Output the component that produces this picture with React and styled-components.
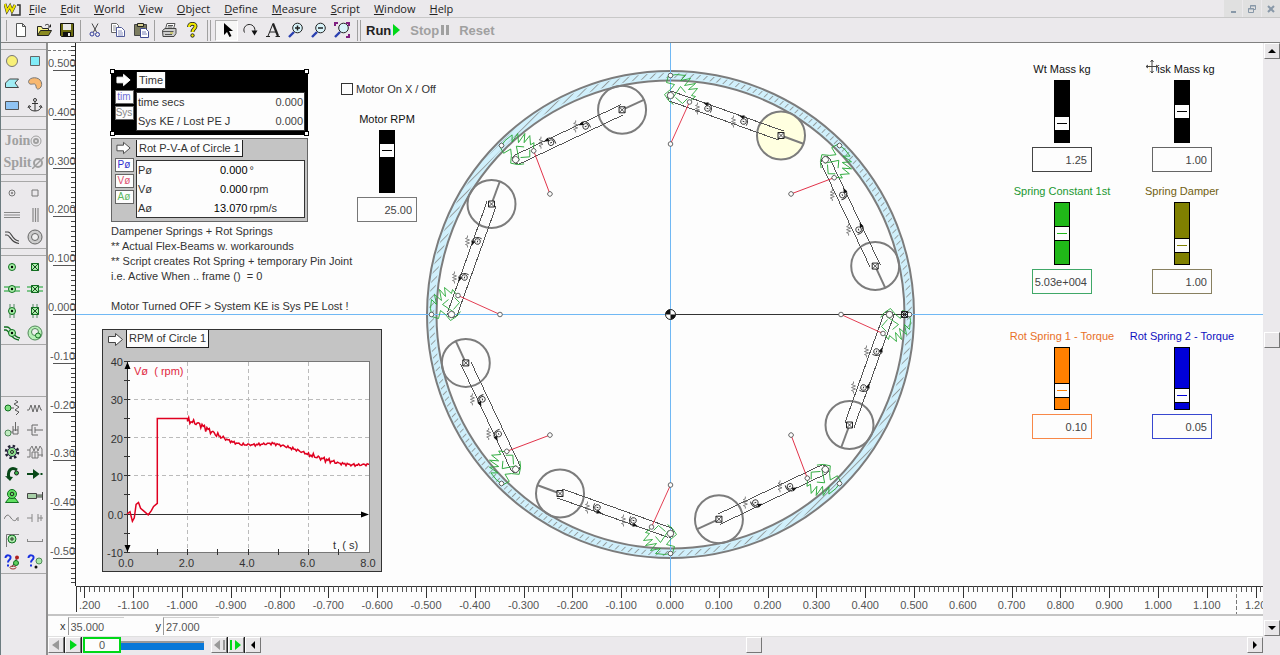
import React, { useState } from "react";
import styled, { createGlobalStyle, css } from "styled-components";

const GlobalStyle = createGlobalStyle`
  * {
    box-sizing: border-box;
  }

  body {
    margin: 0;
    overflow: hidden;
    background-color: #ebe9ec;
    color: #333;
    font-family: "Liberation Sans", Arial, sans-serif;
    font-size: 11px;
  }

  button, input {
    font-family: inherit;
    font-size: inherit;
    color: inherit;
  }
`;

/* ---------- frame ---------- */

const Shell = styled.div`
  display: flex;
  flex-direction: column;
  height: 100vh;
  border-left: 1px solid #6c7c80;
`;

const MenuBar = styled.header`
  display: flex;
  align-items: center;
  height: 18px;
  padding-left: 3px;
  border-bottom: 1px solid #c8c8c8;
`;

const Menu = styled.nav`
  display: flex;
  flex: 1;
  gap: 14px;
  padding-left: 7px;
`;

const MenuItem = styled.button`
  padding: 0;
  border: none;
  background: none;
  font-family: "Open Sans", "Noto Sans", sans-serif;
  font-size: 11px;
  line-height: 16px;
  color: #222;

  &::first-letter {
    text-decoration: underline;
  }
`;

const WindowButton = styled.button`
  display: flex;
  align-items: center;
  justify-content: center;
  width: 18px;
  height: 17px;
  margin-left: 1px;
  padding: 0;
  border: none;
  background-color: #e0e0e0;
`;

const ToolBar = styled.div`
  display: flex;
  align-items: center;
  height: 25px;
  padding-left: 3px;
  border-bottom: 1px solid #808080;
`;

const Grip = styled.span`
  width: 4px;
  height: 21px;
  margin: 0 4px;
  border-left: 1px solid #a0a0a0;
  border-right: 1px solid #a0a0a0;

  ${props => props.$single && css`
    width: 1px;
    margin: 0 2px;
    border-right: none;
  `}
`;

const ToolButton = styled.button`
  display: flex;
  align-items: center;
  justify-content: center;
  width: 23px;
  height: 21px;
  padding: 0;
  border: 1px solid;
  border-color: ${props => (props.$active ? "#b0b0b0 #fff #fff #b0b0b0" : "transparent")};
  background-color: ${props => (props.$active ? "#f6f6f6" : "transparent")};
`;

const RunButton = styled.button`
  display: flex;
  align-items: center;
  gap: 2px;
  padding: 0;
  margin: 0 9px 0 1px;
  border: none;
  background: none;
  font-size: 13px;
  font-weight: bold;
  color: ${props => (props.disabled ? "#a0a0a0" : "#222")};
`;

const Workspace = styled.div`
  display: flex;
  flex: 1;
  min-height: 0;
`;

const Palette = styled.aside`
  width: 47px;
  padding-top: 6px;
  border-right: 2px solid #909090;
`;

const PaletteGroup = styled.div`
  display: grid;
  grid-template-columns: repeat(${props => props.$cols || 2}, 1fr);
  grid-auto-rows: 22px;
  margin-bottom: ${props => props.$after || 6}px;
  border-top: 1px solid #a8a8a8;
  border-bottom: 1px solid #a8a8a8;
`;

const PaletteButton = styled.button`
  display: flex;
  align-items: center;
  justify-content: center;
  padding: 0;
  border: none;
  background: none;
  font-family: "Liberation Serif", serif;
  font-size: 14px;
  font-weight: bold;
  color: #a0a0a0;
`;

const Stage = styled.main`
  display: grid;
  flex: 1;
  min-width: 0;
  grid-template-columns: 28px 1fr 17px;
  grid-template-rows: 1fr 28px 22px 17px 2px;
`;

/* ---------- rulers, scroll bars, playback ---------- */

const RulerBox = styled.div`
  overflow: hidden;
  background-color: #fdfdfd;

  svg {
    display: block;
    width: 100%;
    height: 100%;
  }

  text {
    font-size: 11px;
    fill: #555;
  }
`;

const CoordBar = styled.div`
  grid-column: 1 / 3;
  display: flex;
  align-items: center;
  padding-left: 12px;
  border-top: 2px solid #c4c4c4;
  background-color: #fdfdfd;
`;

const CoordLabel = styled.label`
  display: flex;
  align-items: center;
  gap: 2px;
  margin-right: 32px;
`;

const CoordInput = styled.input`
  width: 56px;
  height: 18px;
  padding: 0 2px;
  border: 0 solid #999;
  border-left-width: 1px;
  border-top: 1px solid #d0d0d0;
  background: none;
  color: #555;
`;

const ScrollColumn = styled.div`
  grid-column: 3;
  grid-row: 1 / 4;
  display: flex;
  flex-direction: column;
  align-items: center;
  justify-content: space-between;
`;

const PlayBar = styled.div`
  grid-column: 1 / 3;
  display: flex;
  align-items: center;
  border-top: 1px solid #e0e0e0;
`;

const BevelButton = styled.button`
  display: flex;
  align-items: center;
  justify-content: center;
  width: 16px;
  height: 16px;
  padding: 0;
  border: 1px solid;
  border-color: #fff #777 #777 #fff;
  box-shadow: ${props => (props.$deep ? "1px 0 0 #222" : "none")};
  margin-right: ${props => (props.$deep ? 1 : 0)}px;
  background-color: #e8e6e8;
`;

const FrameInput = styled.input`
  width: 38px;
  height: 16px;
  margin-left: 1px;
  padding: 0;
  border: 2px solid #00d818;
  background-color: #fdfdfd;
  text-align: center;
  color: #555;
`;

const FrameSlider = styled.input`
  appearance: none;
  width: 83px;
  height: 9px;
  margin: 0 7px 0 0;
  border-top: 2px solid #999;
  background-color: #0878d8;

  &::-webkit-slider-thumb {
    appearance: none;
    width: 1px;
    height: 6px;
  }
`;

const ScrollTrack = styled.div`
  display: flex;
  flex: 1;
  align-items: center;
  justify-content: center;
`;

/* ---------- canvas ---------- */

const Canvas = styled.section`
  position: relative;
  overflow: hidden;
  background-color: #fdfdfd;
`;

const Drawing = styled.svg`
  position: absolute;
  inset: 0;
  width: 100%;
  height: 100%;
`;

const Placed = styled.div`
  position: absolute;
  left: ${props => props.$x}px;
  top: ${props => props.$y}px;
`;

const Meter = styled(Placed)`
  display: grid;
  grid-template-columns: 24px 1fr;
  width: 197px;
  padding: 1px 2px 3px 0;
  border: 1px solid ${props => (props.$selected ? "#000" : "#666")};
  background-color: ${props => (props.$selected ? "#000" : "#c4c4c4")};
`;

const MeterTags = styled.div`
  display: flex;
  flex-direction: column;
  align-items: center;
  gap: 2px;

  svg {
    height: 16px;
  }
`;

const Tag = styled.button`
  width: 19px;
  height: 14px;
  padding: 0;
  border: 1px solid #666;
  background-color: #fdfdfd;
  font-size: 10px;
  line-height: 12px;
  color: ${props => props.$color};
`;

const MeterTitle = styled.h2`
  justify-self: start;
  width: fit-content;
  margin: 0 0 3px;
  padding: 0 2px;
  border: 1px solid #222;
  border-top: none;
  background-color: #fdfdfd;
  font-size: 11px;
  font-weight: normal;
  line-height: 16px;
`;

const Readout = styled.table`
  width: 100%;
  border: 1px solid #333;
  border-collapse: collapse;
  background-color: #fdfdfd;

  th, td {
    height: 19px;
    padding: 0 1px;
    font-weight: normal;
    text-align: left;
  }
`;

const Value = styled.td`
  && {
    text-align: right;
    color: ${props => (props.$dark ? "#000" : "#444")};
  }
`;

const Unit = styled.td`
  width: 56px;
`;

const Handle = styled.i`
  position: absolute;
  width: 5px;
  height: 5px;
  border: 1px solid #000;
  background-color: #fff;
  ${props => props.$v}: -2px;
  ${props => props.$h}: -2px;
`;

const Notes = styled(Placed)`
  line-height: 15px;
  white-space: pre;
`;

const CheckLabel = styled(Placed).attrs({ as: "label" })`
  display: flex;
  align-items: center;
  gap: 3px;
`;

const CheckBox = styled.input`
  appearance: none;
  width: 12px;
  height: 12px;
  margin: 0;
  border: 1px solid #333;
  background-color: #fdfdfd;
`;

const Control = styled(Placed)`
  display: flex;
  flex-direction: column;
  align-items: center;
  gap: 4px;
  width: 120px;
  color: ${props => props.$color};
`;

const ControlLabel = styled.label`
  line-height: 14px;
  white-space: nowrap;
`;

const Slider = styled.input`
  appearance: none;
  writing-mode: vertical-lr;
  direction: rtl;
  width: 16px;
  height: 63px;
  margin: 0;
  border: 1px solid #000;
  background-color: ${props => props.$color};

  &::-webkit-slider-thumb {
    appearance: none;
    width: 14px;
    height: 15px;
    border: 1px solid #000;
    border-width: 1px 0;
    background: linear-gradient(${props => props.$mark}, ${props => props.$mark}) center / 10px 1px no-repeat #fdfdfd;
  }
`;

const NumberBox = styled.input`
  width: 60px;
  height: 25px;
  padding: 0 4px 0 0;
  border: 1px solid ${props => props.$line};
  background-color: #fdfdfd;
  text-align: right;
  color: #444;
`;

const GraphWindow = styled(Placed)`
  width: 280px;
  border: 1px solid #333;
  background-color: #c4c4c4;

  svg {
    display: block;
  }

  text {
    font-size: 11px;
    fill: #333;
  }
`;

const GraphHead = styled.div`
  display: flex;
  align-items: center;
  gap: 1px;
  height: 18px;
  padding-left: 4px;
`;

const GraphTitle = styled(MeterTitle)`
  margin: 0;
  line-height: 17px;
`;

const MoveCursor = styled(Placed).attrs({ as: "svg" })`
  pointer-events: none;
`;

/* ---------- icons ---------- */

const Icon = ({ size = 16, children }) => (
  <svg width={size} height={size} viewBox="0 0 16 16" fill="none" stroke="#222" strokeWidth="1">
    {children}
  </svg>
);

const lens = (
  <>
    <path d="M6 10 1 15" stroke="#2a40b0" strokeWidth="2.4" />
    <circle cx="9.500" cy="6" r="4.800" fill="#d8f4fa" stroke="#222" />
  </>
);

const toolIcons = {
  New: <path d="M3.500 1.500h6l3 3v10h-9zM9.500 1.500v3h3" fill="#fff" stroke="#555" />,
  Open: (
    <>
      <path d="M1.500 13.500v-9h4l1 2h6v2.500" fill="#f4f08a" />
      <path d="M1.500 13.500 4.500 8.500h11l-3 5z" fill="#8a8a20" />
      <path d="M9 3.500c2-2 4-1 4.500 1M14.500 2.500v2.500h-2.500" />
    </>
  ),
  Save: (
    <>
      <path d="M1.500 1.500h13v13h-12l-1-1z" fill="#6a6a10" stroke="#111" />
      <path d="M4 2h8v6H4z" fill="#e8e8e8" stroke="none" />
      <path d="M4 10h8v4H4z" fill="#111" stroke="none" />
      <path d="M9 11h2v3H9z" fill="#eee" stroke="none" />
    </>
  ),
  Cut: (
    <>
      <path d="M5 1.500 9.500 10M11 1.500 6.500 10" stroke="#444" />
      <circle cx="5" cy="12" r="2" stroke="#303a98" />
      <circle cx="10.500" cy="12.500" r="2" stroke="#303a98" />
    </>
  ),
  Copy: (
    <>
      <path d="M1.500 1.500h5l2 2v7h-7z" fill="#fff" stroke="#666" />
      <path d="M3 4h3M3 6h4M3 8h4" stroke="#999" />
      <path d="M6.500 5.500h5l3 3v6h-8z" fill="#fff" stroke="#505a98" />
      <path d="M8 9h4M8 11h5M8 13h5" stroke="#8890c0" />
    </>
  ),
  Paste: (
    <>
      <path d="M1.500 2.500h12v11h-12z" fill="#7c7c60" stroke="#444" />
      <path d="M4.500 1.500h6v3h-6z" fill="#d8d090" />
      <path d="M7.500 6.500h5l3 3v6h-8z" fill="#fff" stroke="#404a90" />
      <path d="M9 10h4M9 12h5" stroke="#7880b8" />
    </>
  ),
  Print: (
    <>
      <path d="M4.500 7 6 1.500h8L12.500 7" fill="#fff" stroke="#555" />
      <path d="M1.500 8.500 4 6.500h11v5l-2 3h-11z" fill="#ccc" stroke="#444" />
      <path d="M2 9.500h10.500M4 12.500h7M7 3.500h5M6.500 5h5" stroke="#555" />
      <path d="M9 11h3" stroke="#c8c020" />
    </>
  ),
  Help: (
    <>
      <path d="M5 5c0-4.500 7-4 6.500-.5C11.200 7 8.500 7 8.500 10" stroke="#222" strokeWidth="3.800" />
      <path d="M5 5c0-4.500 7-4 6.500-.5C11.200 7 8.500 7 8.500 10" stroke="#f0e800" strokeWidth="2.200" />
      <circle cx="8.500" cy="13.500" r="1.700" fill="#f0e800" />
    </>
  ),
  Select: <path d="M5 1v12l3-3 2.500 5 2-1L10 9h4z" fill="#000" stroke="none" />,
  Rotate: (
    <>
      <path d="M2.500 10.500A5.500 5.500 0 1 1 12.500 10" />
      <path d="M9.500 8.500h6l-3 5z" fill="#111" stroke="none" />
    </>
  ),
  Text: (
    <>
      <path d="M8 1.500 13 14" strokeWidth="2.200" />
      <path d="M8 1.500 3 14M5 10h6M1 14.500h4M10.500 14.500H15" />
    </>
  ),
  "Zoom in": <>{lens}<path d="M7 6h5M9.500 3.500v5" strokeWidth="1.500" /></>,
  "Zoom out": <>{lens}<path d="M7 6h5" strokeWidth="1.500" /></>,
  "Zoom to fit": <>{lens}<path d="M1 4V1h3M12 1h3v3M15 12v3h-3" stroke="#802080" strokeWidth="2" /></>
};

const G = "#58b868";
const joint = (
  <>
    <circle cx="8" cy="8" r="3.500" fill="#a8f0a8" stroke="#107020" />
    <circle cx="8" cy="8" r="1.200" fill="#000" stroke="none" />
  </>
);
const rigid = (
  <>
    <path d="M4.500 4.500h7v7h-7z" fill="#a8f0a8" stroke="#107020" />
    <path d="m4.500 4.500 7 7m0-7-7 7" stroke="#204828" />
  </>
);

const bodyIcons = {
  Circle: <circle cx="8" cy="8" r="5.500" fill="#f8f078" stroke="#777" />,
  Square: <path d="M3.500 3.500h9v9h-9z" fill="#80ecf8" stroke="#666" />,
  Polygon: <path d="M1.500 12.500V8l4-4h9L11 8l3.500 4.500z" fill="#a0ecf4" stroke="#444" />,
  "Curved polygon": <path d="M1.500 6.500C2.500 1.500 12 1.500 14 6.500c2 4-1 8-3.500 7.500C8 13 10 9.500 7.500 9 5 8.800 2 10.500 1.500 6.500z" fill="#f8b870" stroke="#777" />,
  Rectangle: <path d="M1.500 4.500h13v8h-13z" fill="#90c4f4" stroke="#555" />,
  Anchor: (
    <g stroke="#333">
      <circle cx="8" cy="3" r="1.500" />
      <path d="M8 4.500V14M5 6.500h6M2 9.500c0 6 12 6 12 0M1 11l1-2.500L4 10M15 11l-1-2.500L12 10" />
    </g>
  )
};

const pointIcons = {
  Point: (
    <g stroke="#777">
      <circle cx="8" cy="8" r="3" />
      <circle cx="8" cy="8" r=".8" />
    </g>
  ),
  "Square point": <path d="M5 5h6v6H5z" stroke="#777" />,
  "Horizontal slot": <path d="M0 5.500h16M0 10.500h16M0 8h16" stroke="#888" strokeWidth="1.200" />,
  "Vertical slot": <path d="M6 1v14M8.500 1v14M11 1v14" stroke="#888" strokeWidth="1.200" />,
  "Curved slot": <path d="M1 3h3c4 0 4 9 11 9M1 6h2c3 0 4 8 12 8.500" stroke="#444" strokeWidth="1.200" />,
  "Closed slot": (
    <g stroke="#666">
      <circle cx="8" cy="8" r="7" fill="#ccc" />
      <circle cx="8" cy="8" r="3.500" fill="#eee" />
    </g>
  )
};

const jointIcons = {
  "Pin joint": joint,
  "Rigid joint": rigid,
  "Pinned slot": <><path d="M0 6h16M0 10h16" stroke={G} strokeWidth="1.500" />{joint}</>,
  "Keyed slot": <><path d="M0 6h16M0 10h16" stroke={G} strokeWidth="1.500" />{rigid}</>,
  "Vertical pinned slot": <><path d="M6 1v14M10 1v14" stroke="#508860" />{joint}</>,
  "Vertical keyed slot": <><path d="M6 1v14M10 1v14" stroke="#508860" />{rigid}</>,
  "Curved slot joint": <><path d="M0 2h3c5 0 5 10 13 11M0 5h2c3 0 5 10 13 10" stroke="#107020" strokeWidth="1.300" />{joint}</>,
  "Closed slot joint": (
    <>
      <circle cx="8" cy="8" r="7" fill="#b8f0b8" stroke="#508858" />
      <circle cx="8" cy="7" r="3.500" fill="#eee" stroke="#508858" />
      <circle cx="11" cy="10.500" r="2.500" fill="#a8f0a8" stroke="#107020" />
    </>
  )
};

const forceIcons = {
  "Rotational spring": (
    <>
      <circle cx="4" cy="8" r="3" fill="#80e080" stroke="#107020" />
      <path d="M7 8h3M11 0l3 2-4 2 5 3-4 3 4 2-3 3" stroke="#555" />
    </>
  ),
  Spring: <path d="M0 10h2l2-5 2 7 2-7 2 7 2-7 2 5h1" stroke="#666" />,
  "Rotational damper": (
    <>
      <circle cx="4" cy="11" r="3" fill="#c0ecc0" stroke="#508858" />
      <path d="M7 10h2M9 4v8h5V4M11.500 0v9M9 8h5" stroke="#666" />
    </>
  ),
  Damper: <path d="M0 8h5M11 8h5M11 3H5v10h6M8 5v6M8 8h3" stroke="#666" />,
  Gear: (
    <>
      <circle cx="8" cy="8" r="6" stroke="#223" strokeWidth="2.500" strokeDasharray="2.400 2.300" />
      <circle cx="8" cy="8" r="4.500" fill="#90e090" stroke="#224" />
      <circle cx="8" cy="8" r="1.500" />
    </>
  ),
  "Spring damper": <path d="M0 13h3V5l2-3 2 5 2-5 2 5 2-5 2 3v8M5 8h6v6H5zM8 8v6M11 11h5M0 6h3" stroke="#777" />,
  Torque: (
    <>
      <path d="M13 4C7 0 3 5 5 12" stroke="#084818" strokeWidth="3" />
      <path d="m1 10 8 1-3 4z" fill="#084818" stroke="none" />
      <circle cx="12.500" cy="7" r="2" fill="#38b848" />
    </>
  ),
  Force: <path d="M0 8h8M7 5l4 3-4 3zM13.500 8h2" stroke="#084818" strokeWidth="2" fill="#084818" />,
  Motor: (
    <>
      <path d="M1.500 14.500 5 10h6l3.500 4.500z" fill="#60e060" stroke="#107020" />
      <circle cx="8" cy="6" r="4.500" fill="#60e060" stroke="#107020" />
      <circle cx="8" cy="6" r="1.800" />
    </>
  ),
  Actuator: <path d="M.5 5.500h9v5h-9zM9.500 7h6v2h-6zM15.500 4v8" fill="#a8d0a8" stroke="#444" />,
  Rope: <path d="M0 9c3-6 5-4 7-1s5 4 6 0M14 7v4" stroke="#777" />,
  Separator: <path d="M0 8h5M5 4v8M11 4v8M11 8h5M14 5v6" stroke="#888" />,
  Pulley: (
    <>
      <circle cx="8" cy="7" r="4" fill="#a8e8a8" stroke="#107020" />
      <circle cx="8" cy="7" r="1.200" />
      <path d="M2.500 15V2.500H15" stroke="#777" />
    </>
  ),
  Rod: <path d="M0 9.500h16M.5 7v3M15.500 7v3" stroke="#888" />,
  "Ask joint": (
    <>
      <path d="M1.500 4c0-4 6-3 5 0C6 6 4 6 4 8.500M4 10.500v2" stroke="#1830e0" strokeWidth="2" />
      <path d="m8 13 5-9" stroke="#333" />
      <circle cx="13" cy="3.500" r="2" fill="#b02020" stroke="none" />
      <circle cx="12" cy="9" r="2.500" fill="#60d060" stroke="#107020" />
      <ellipse cx="9" cy="13.500" rx="3" ry="1.500" stroke="#a03030" />
    </>
  ),
  "Ask force": (
    <>
      <path d="M1.500 4c0-4 6-3 5 0C6 6 4 6 4 8.500M4 10.500v2" stroke="#1830e0" strokeWidth="2" />
      <circle cx="12" cy="7" r="3" fill="#a8e8a8" stroke="#508858" />
      <circle cx="9" cy="13" r="1.500" fill="#111" stroke="none" />
    </>
  )
};

const IconGroup = ({ icons, after }) => (
  <PaletteGroup $after={after}>
    {Object.entries(icons).map(([name, shape]) => (
      <PaletteButton key={name} aria-label={name}><Icon>{shape}</Icon></PaletteButton>
    ))}
  </PaletteGroup>
);

const Triangle = ({ dir, color = "#000", bar }) => {
  const turn = { right: 0, down: 90, left: 180, up: 270 }[dir];
  return (
    <svg width="12" height="12" viewBox="-6 -6 12 12">
      <g transform={`rotate(${turn})`} fill={color}>
        {bar ? <path d="M-1-5 5 0-1 5zM-6-5h2V5h-2z" /> : <path d={color === "#000" ? "M-2-4 2 0-2 4z" : "M-3-5 4 0-3 5z"} />}
      </g>
    </svg>
  );
};

const BlockArrow = ({ fill, stroke }) => (
  <svg width="18" height="17" viewBox="0 0 18 17">
    <path d="M1.500 5.500h7v-3l7 6-7 6v-3h-7z" fill={fill} stroke={stroke} />
  </svg>
);

/* ---------- rulers ---------- */

// world origin inside the canvas and pixels per world unit
const CX = 594;
const CY = 271;
const SCALE = 488;

const VerticalRuler = () => {
  const ticks = [];
  for (let i = -55; i <= 55; i++) ticks.push(i);
  return (
    <svg>
      <g shapeRendering="crispEdges">
        {ticks.map(i => {
          const y = Math.round(CY - (i / 100) * SCALE) + 0.5;
          return <path key={i} d={`M${i % 10 === 0 ? 5 : 23} ${y}H28`} stroke={i % 10 === 0 ? "#555" : "#444"} />;
        })}
        <path d="M0 7.500h24" stroke="#777" strokeDasharray="3 2" />
        <path d="M27.500 0V3000" stroke="#222" />
      </g>
      {ticks.filter(i => i % 10 === 0).map(i => (
        <text key={i} x={i < 0 ? 2 : 0} y={CY - (i / 100) * SCALE - 3}>
          {(i / 100).toFixed(i < 0 ? 2 : 3)}
        </text>
      ))}
    </svg>
  );
};

const HorizontalRuler = () => {
  const ticks = [];
  for (let i = -121; i <= 121; i++) ticks.push(i);
  return (
    <svg>
      <g shapeRendering="crispEdges">
        <path d="M0 .5H3000M.5 0V26" stroke="#333" />
        {ticks.map(i => {
          const x = Math.round(CX + (i / 100) * SCALE) + 0.5;
          return <path key={i} d={`M${x} 0V${i % 10 === 0 ? 12 : 6}`} stroke={i % 10 === 0 ? "#333" : "#555"} />;
        })}
        <path d="M1160.500 2V28" stroke="#777" strokeDasharray="4 2" />
      </g>
      {ticks.filter(i => i % 10 === 0).map(i =>
        i === -120 ? (
          <text key={i} x="3" y="23">.200</text>
        ) : (
          <text key={i} x={CX + (i / 100) * SCALE} y="23" textAnchor="middle">{(i / 100).toFixed(i === 120 ? 2 : 3)}</text>
        )
      )}
    </svg>
  );
};

/* ---------- mechanism ---------- */

const armAngles = [0, 45, 90, 135, 180, 225, 270, 315];
const beamJoints = [[37, -206], [73, -193]];
const disk = [110.5, -179];

const rotate = ([x, y], deg) => {
  const a = (deg * Math.PI) / 180;
  return [x * Math.cos(a) - y * Math.sin(a), x * Math.sin(a) + y * Math.cos(a)];
};

const Arm = ({ angle }) => {
  const [dx, dy] = rotate(disk, angle);
  return (
    <>
      <g transform={`rotate(${angle})`} fill="none">
        <circle cx={disk[0]} cy={disk[1]} r="24" fill={angle === 0 ? "#ffffe0" : "none"} stroke="#7c7c7c" strokeWidth="2" />
        <path d="m110.500-179 23 8.500" stroke="#7c7c7c" strokeWidth="2" />
        <g stroke="#555" shapeRendering="crispEdges">
          <path d="M2-223 113-183.500M-1-213.500 108-174.500" />
          <path d="M2-223c-6 0-6 6-3 9" />
        </g>
        <g stroke="#28a838" strokeWidth=".9">
          <path d="M0-239 6-240 15-239 10-234 20-236 14-229 25-231 18-225 27-226 21-219 25-218 19-213" />
          <path d="M-2-239-4-232 4-230 0-225-6-220-2-214 3-210M2-216 10-228 15-222M5-217 12-211 17-216" />
        </g>
        <path d="M19-212.500 0-170.500" stroke="#e02840" strokeWidth=".9" />
        <g fill="#fdfdfd" stroke="#444" strokeWidth=".8">
          <circle cx="0" cy="-239" r="2.300" />
          <circle cx="0" cy="-219" r="3.200" />
          <circle cx="19" cy="-212.500" r="2.300" />
          <circle cx="0" cy="-170.500" r="2.300" />
        </g>
        {beamJoints.map(([x, y]) => (
          <g key={x} transform={`translate(${x} ${y}) rotate(20)`} stroke="#333" strokeWidth=".9">
            <circle r="2.800" />
            <path d="M-2-5c3-1 7 2 6 8M-1 0h2" />
            <path d="m-6-4 5-2v4z" fill="#111" stroke="none" />
          </g>
        ))}
      </g>
      {beamJoints.map(p => {
        const [x, y] = rotate(p, angle);
        return (
          <path
            key={p[0]}
            transform={`translate(${x - 10} ${y})`}
            d="M0-6v2l-2 1 4 1.500-4 1.500 4 1.500-4 1.500 2 1v2"
            fill="none"
            stroke="#666"
            strokeWidth=".8"
          />
        );
      })}
      <g transform={`translate(${dx} ${dy})`} stroke="#222" fill="#fdfdfd">
        <path d="M-3-3h6v6h-6z" />
        <path d="m-3-3 6 6m0-6-6 6" strokeWidth=".8" />
      </g>
    </>
  );
};

const Mechanism = () => (
  <Drawing>
    <defs>
      <pattern id="hatch" width="5.500" height="5.500" patternUnits="userSpaceOnUse" patternTransform="rotate(45)">
        <path d="M.5 0v5.500" stroke="#909898" strokeWidth=".9" />
      </pattern>
    </defs>
    <g transform={`translate(${CX + 0.5} ${CY + 0.5})`} fill="none">
      <circle r="239" stroke="#d0f0fc" strokeWidth="9" />
      <circle r="239" stroke="url(#hatch)" strokeWidth="5" />
      <circle r="243.500" stroke="#7c7c7c" strokeWidth="2" />
      <circle r="234" stroke="#7c7c7c" strokeWidth="2" />
      <g shapeRendering="crispEdges">
        <path d="M-3000 0H3000M0-3000V3000" stroke="#70b8f4" />
        <path d="M0 0H240" stroke="#333" />
      </g>
      {armAngles.map(a => <Arm key={a} angle={a} />)}
      <path d="M231-3h6v6h-6zm0 0 6 6m0-6-6 6" stroke="#222" />
      <circle r="5" fill="#fdfdfd" stroke="#222" />
      <path d="M0 0h-5a5 5 0 0 1 5-5zM0 0h5a5 5 0 0 1-5 5z" fill="#111" />
    </g>
  </Drawing>
);

/* ---------- RPM graph ---------- */

const rpmTrend = [
  [2, 24.5], [2.4, 23.5], [2.8, 21.5], [3.1, 20.2], [3.5, 18.8], [3.8, 18.2], [4.2, 18.1],
  [4.8, 18.5], [5.2, 17.8], [5.6, 16.8], [6, 15.6], [6.4, 14.6], [7, 13.3], [7.5, 12.8], [8, 13]
];

const rpmPoints = () => {
  const points = [
    [0, 0], [0.1, 0.6], [0.18, -1.9], [0.24, -1], [0.3, 2.5], [0.38, 3], [0.45, 1.5], [0.55, 0.8],
    [0.7, -0.2], [0.8, 0.8], [0.88, 2], [1, 2.8], [1, 25], [2, 25]
  ];
  for (let k = 1; k < rpmTrend.length; k++) {
    const [t0, v0] = rpmTrend[k - 1];
    const [t1, v1] = rpmTrend[k];
    for (let t = t0; t < t1; t += 0.04) {
      const amp = t < 3.2 ? 0.9 : t > 6 && t < 6.9 ? 0.7 : 0.4;
      points.push([t, v0 + ((v1 - v0) * (t - t0)) / (t1 - t0) + amp * Math.sin(t * 61) * Math.cos(t * 23)]);
    }
  }
  points.push([8, 13]);
  return points;
};

const px = t => 24 + t * 30.25;
const py = v => 166 - v * 3.82;

const Graph = () => (
  <GraphWindow $x={26} $y={286}>
    <GraphHead>
      <BlockArrow fill="#fdfdfd" stroke="#444" />
      <GraphTitle>RPM of Circle 1</GraphTitle>
    </GraphHead>
    <svg width="278" height="223" viewBox="0 0 278 223" fill="none">
      <g shapeRendering="crispEdges">
        <path d="M24 13.500H266.500V204H24z" fill="#fdfdfd" stroke="#777" />
        <g stroke="#bbb" strokeDasharray="4 3">
          {[2, 4, 6].map(t => <path key={t} d={`M${px(t)} 14V204`} />)}
          {[10, 20, 30].map(v => <path key={v} d={`M24 ${py(v)}H266`} />)}
        </g>
        <g stroke="#333">
          <path d="M24.500 14V204M24 166.500H264" />
          {[-10, -5, 0, 5, 10, 15, 20, 25, 30, 35, 40].map(v => <path key={v} d={`M21 ${py(v)}h6`} />)}
          {[1, 2, 3, 4, 5, 6, 7].map(t => <path key={t} d={`M${px(t)} 201v6`} />)}
        </g>
      </g>
      <path d="m24.500 14 3 7h-6zM24.500 204l3-7h-6zM266 166.500l-8-3v6z" fill="#000" />
      <path d={`M${rpmPoints().map(([t, v]) => `${px(t).toFixed(1)} ${py(v).toFixed(1)}`).join("L")}`} stroke="#e00020" strokeWidth="1.500" />
      {[-10, 0, 10, 20, 30, 40].map(v => (
        <text key={v} x="20" y={py(v) + 5} textAnchor="end">{v === 0 ? "0.0" : v}</text>
      ))}
      {[0, 2, 4, 6, 8].map(t => (
        <text key={t} x={px(t) - 1} y="219" textAnchor="middle">{t.toFixed(1)}</text>
      ))}
      <text x="31" y="27" xmlSpace="preserve" style={{ fill: "#e02840" }}>Vø  ( rpm)</text>
      <text x="230" y="201" xmlSpace="preserve">t  ( s)</text>
    </svg>
  </GraphWindow>
);

/* ---------- controls ---------- */

const controls = [
  { id: "rpm", label: "Motor RPM", x: 251, y: 69, pos: 73, value: "25.00", text: "#111", fill: "#000", line: "#777" },
  { id: "wt", label: "Wt Mass kg", x: 926, y: 19, pos: 25, value: "1.25", text: "#111", fill: "#000", line: "#444" },
  { id: "disk", label: "Disk Mass kg", x: 1046, y: 19, pos: 50, value: "1.00", text: "#111", fill: "#000", line: "#666" },
  { id: "k1", label: "Spring Constant 1st", x: 926, y: 141, pos: 50, value: "5.03e+004", text: "#209830", fill: "#20b818", line: "#40a868" },
  { id: "damp", label: "Spring Damper", x: 1046, y: 141, pos: 23, value: "1.00", text: "#706010", fill: "#808000", line: "#888060" },
  { id: "t1", label: "Rot Spring 1 - Torque", x: 926, y: 286, pos: 23, value: "0.10", text: "#e87028", fill: "#ff8000", line: "#f88848" },
  { id: "t2", label: "Rot Spring 2 - Torque", x: 1046, y: 286, pos: 13, value: "0.05", text: "#1010c0", fill: "#0000d8", line: "#3848d0" }
];

const SliderControl = ({ item }) => {
  const [pos, setPos] = useState(item.pos);
  return (
    <Control $x={item.x} $y={item.y} $color={item.text}>
      <ControlLabel htmlFor={item.id}>{item.label}</ControlLabel>
      <Slider
        id={item.id}
        type="range"
        value={pos}
        onChange={e => setPos(Number(e.target.value))}
        $color={item.fill}
        $mark={item.fill}
      />
      <NumberBox aria-label={`${item.label} value`} defaultValue={item.value} $line={item.line} />
    </Control>
  );
};

const TimeMeter = () => (
  <Meter $x={35} $y={27} $selected>
    <MeterTags>
      <BlockArrow fill="#fff" stroke="#fff" />
      <Tag $color="#7070d8">tim</Tag>
      <Tag $color="#888">Sys</Tag>
    </MeterTags>
    <div>
      <MeterTitle>Time</MeterTitle>
      <Readout>
        <tbody>
          <tr><th scope="row">time secs</th><Value>0.000</Value></tr>
          <tr><th scope="row">Sys KE / Lost PE J</th><Value>0.000</Value></tr>
        </tbody>
      </Readout>
    </div>
    <Handle $v="top" $h="left" />
    <Handle $v="top" $h="right" />
    <Handle $v="bottom" $h="left" />
    <Handle $v="bottom" $h="right" />
  </Meter>
);

const RotationMeter = () => (
  <Meter $x={35} $y={95}>
    <MeterTags>
      <BlockArrow fill="#fdfdfd" stroke="#444" />
      <Tag $color="#3030d0">Pø</Tag>
      <Tag $color="#e05070">Vø</Tag>
      <Tag $color="#60b860">Aø</Tag>
    </MeterTags>
    <div>
      <MeterTitle>Rot P-V-A of Circle 1</MeterTitle>
      <Readout>
        <tbody>
          <tr><th scope="row">Pø</th><Value $dark>0.000</Value><Unit>°</Unit></tr>
          <tr><th scope="row">Vø</th><Value $dark>0.000</Value><Unit>rpm</Unit></tr>
          <tr><th scope="row">Aø</th><Value $dark>13.070</Value><Unit>rpm/s</Unit></tr>
        </tbody>
      </Readout>
    </div>
  </Meter>
);

const notes = `Dampener Springs + Rot Springs
** Actual Flex-Beams w. workarounds
** Script creates Rot Spring + temporary Pin Joint
i.e. Active When .. frame ()  = 0

Motor Turned OFF > System KE is Sys PE Lost !`;

const Tools = ({ names, active }) =>
  names.map(name => (
    <ToolButton key={name} aria-label={name} $active={name === active}>
      <Icon>{toolIcons[name]}</Icon>
    </ToolButton>
  ));

const App = () => {
  const [motorOn, setMotorOn] = useState(false);

  return (
    <>
      <GlobalStyle />
      <Shell>
        <MenuBar>
          <svg width="18" height="16" viewBox="0 0 18 16" fill="none">
            <path d="M13 4h3v10H7" stroke="#333" strokeWidth="1.500" />
            <path d="m1 3 2 7 3-5 2 5 3-6" stroke="#333" strokeWidth="3" />
            <path d="m1 3 2 7 3-5 2 5 3-6" stroke="#f0e400" strokeWidth="2" />
          </svg>
          <Menu>
            {["File", "Edit", "World", "View", "Object", "Define", "Measure", "Script", "Window", "Help"].map(name => (
              <MenuItem key={name}>{name}</MenuItem>
            ))}
          </Menu>
          <WindowButton aria-label="Minimize">
            <svg width="10" height="10"><path d="M3 8h5" stroke="#8898a8" strokeWidth="2" /></svg>
          </WindowButton>
          <WindowButton aria-label="Restore">
            <svg width="10" height="10" fill="none" stroke="#8898a8">
              <path d="M3.500 4V1.500h5v4H7M1.500 4.500h5v4h-5zM3 2h6M1 5h6" />
            </svg>
          </WindowButton>
          <WindowButton aria-label="Close">
            <svg width="10" height="10"><path d="m2 2 6 6m0-6L2 8" stroke="#8898a8" strokeWidth="2" /></svg>
          </WindowButton>
        </MenuBar>

        <ToolBar>
          <Grip $single />
          <Tools names={["New", "Open", "Save"]} />
          <Grip $single />
          <Tools names={["Cut", "Copy", "Paste"]} />
          <Grip $single />
          <Tools names={["Print", "Help"]} />
          <Grip />
          <Tools names={["Select", "Rotate", "Text", "Zoom in", "Zoom out", "Zoom to fit"]} active="Select" />
          <Grip />
          <RunButton>
            Run
            <svg width="7" height="12"><path d="M0 0v12l7-6z" fill="#00d818" /></svg>
          </RunButton>
          <RunButton disabled>
            Stop
            <svg width="8" height="10"><path d="M0 0h3v10H0zM5 0h3v10H5z" fill="#a0a0a0" /></svg>
          </RunButton>
          <RunButton disabled>Reset</RunButton>
        </ToolBar>

        <Workspace>
          <Palette>
            <IconGroup icons={bodyIcons} after={12} />
            <PaletteGroup $cols={1}>
              <PaletteButton disabled>
                Join
                <svg width="12" height="12" fill="none" stroke="#a0a0a0">
                  <circle cx="6" cy="6" r="5" /><circle cx="6" cy="6" r="2" strokeWidth="2" />
                </svg>
              </PaletteButton>
              <PaletteButton disabled>
                Split
                <svg width="12" height="12" fill="none" stroke="#a0a0a0">
                  <circle cx="6" cy="6" r="4" strokeWidth="2" /><path d="M0 12 12 0" strokeWidth="1.500" />
                </svg>
              </PaletteButton>
            </PaletteGroup>
            <IconGroup icons={pointIcons} />
            <IconGroup icons={jointIcons} after={51} />
            <IconGroup icons={forceIcons} />
          </Palette>

          <Stage>
            <RulerBox><VerticalRuler /></RulerBox>
            <Canvas>
              <Mechanism />
              <TimeMeter />
              <RotationMeter />
              <Notes $x={35} $y={181}>{notes}</Notes>
              <CheckLabel $x={265} $y={40}>
                <CheckBox type="checkbox" checked={motorOn} onChange={e => setMotorOn(e.target.checked)} />
                Motor On X / Off
              </CheckLabel>
              {controls.map(item => <SliderControl key={item.id} item={item} />)}
              <Graph />
              <MoveCursor $x={1069} $y={16} width="14" height="16" viewBox="0 0 14 16">
                <path d="M5 4h6v12H5z" fill="#fdfdfd" />
                <path d="M7 1v13M1 7.500h12M5.500 3 7 1l1.500 2M5.500 12 7 14l1.500-2M3 6 1 7.500 3 9M11 6l2 1.500L11 9" fill="none" stroke="#444" />
              </MoveCursor>
            </Canvas>
            <ScrollColumn>
              <BevelButton aria-label="Scroll up"><Triangle dir="up" /></BevelButton>
              <BevelButton aria-label="Vertical position" />
              <BevelButton aria-label="Scroll down"><Triangle dir="down" /></BevelButton>
            </ScrollColumn>
            <RulerBox />
            <RulerBox><HorizontalRuler /></RulerBox>
            <CoordBar>
              <CoordLabel>x<CoordInput defaultValue="35.000" /></CoordLabel>
              <CoordLabel>y<CoordInput defaultValue="27.000" /></CoordLabel>
            </CoordBar>
            <PlayBar>
              <BevelButton $deep aria-label="Play back"><Triangle dir="left" color="#999" /></BevelButton>
              <BevelButton $deep aria-label="Play"><Triangle dir="right" color="#00d818" /></BevelButton>
              <FrameInput aria-label="Frame" defaultValue="0" />
              <FrameSlider aria-label="Frame position" type="range" defaultValue="0" />
              <BevelButton $deep aria-label="Step back"><Triangle dir="left" color="#999" bar /></BevelButton>
              <BevelButton $deep aria-label="Step forward"><Triangle dir="right" color="#00d818" bar /></BevelButton>
              <BevelButton aria-label="Scroll left"><Triangle dir="left" /></BevelButton>
              <ScrollTrack><BevelButton aria-label="Horizontal position" /></ScrollTrack>
              <BevelButton aria-label="Scroll right"><Triangle dir="right" /></BevelButton>
            </PlayBar>
          </Stage>
        </Workspace>
      </Shell>
    </>
  );
};

export default App;
